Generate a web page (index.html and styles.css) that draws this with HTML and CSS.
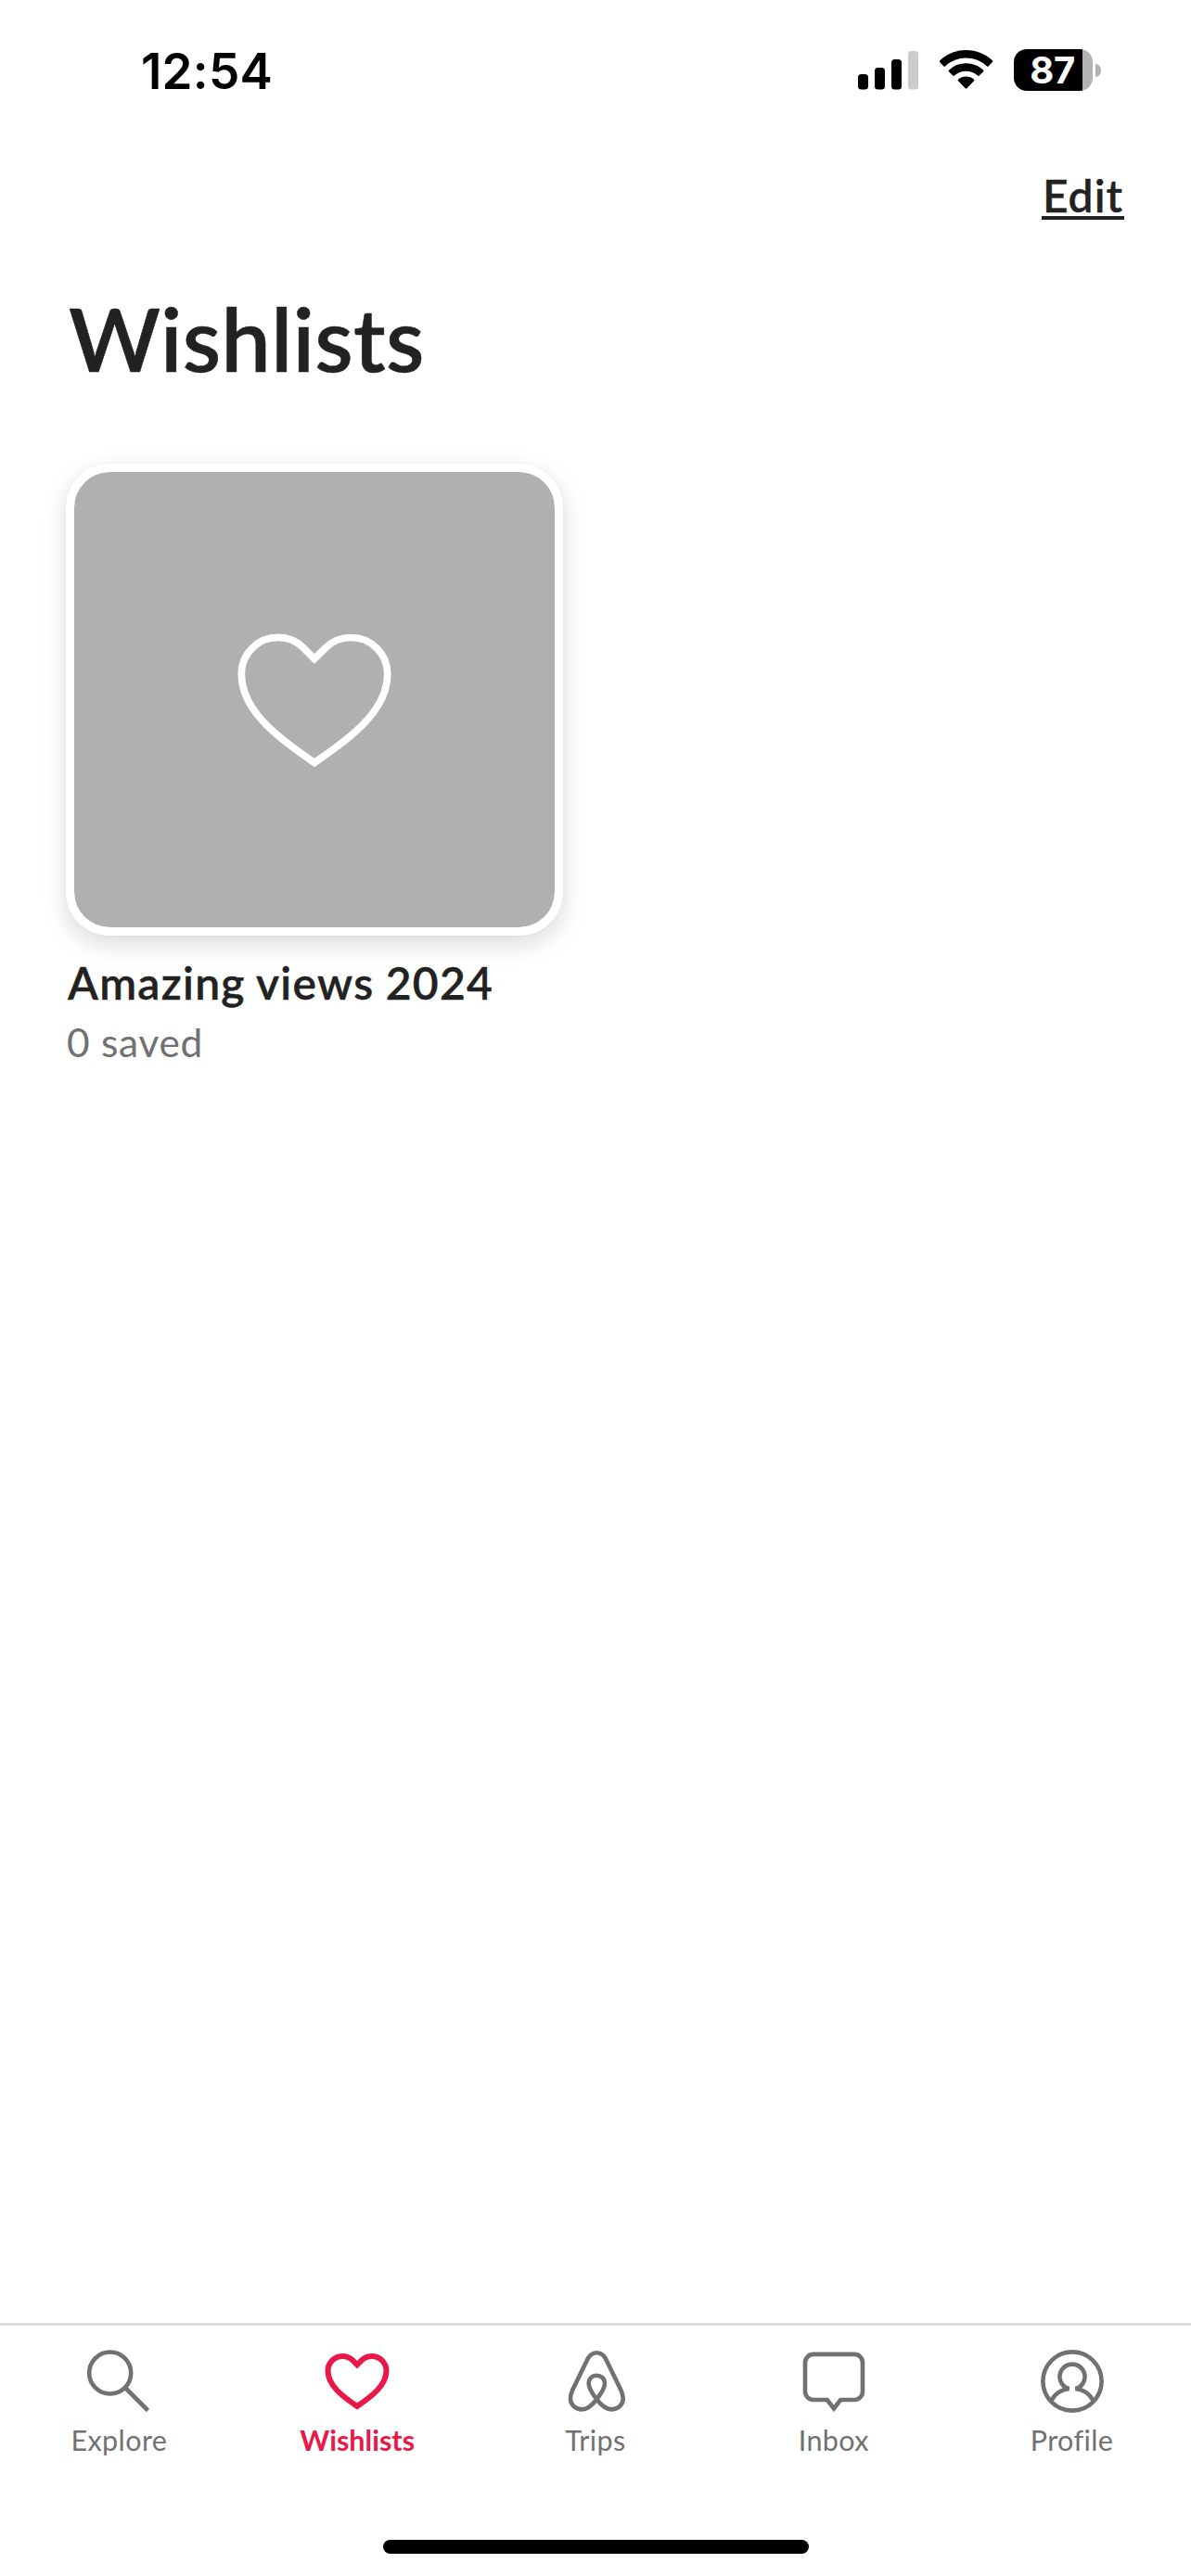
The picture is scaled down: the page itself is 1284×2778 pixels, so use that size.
FILE: index.html
```html
<!DOCTYPE html>
<html lang="en">
<head>
<meta charset="utf-8">
<title>Wishlists</title>
<link rel="stylesheet" href="styles.css">
</head>
<body>
<div class="screen">
  <header class="status">
    <span class="time">12:54</span>
    <div class="indicators">
      <svg class="signal" width="65" height="42" viewBox="0 0 65 42">
        <rect x="0" y="25" width="11" height="16.500" rx="3.500"/>
        <rect x="18" y="18" width="11" height="23.500" rx="3.500"/>
        <rect x="36" y="9" width="11" height="32.500" rx="3.500"/>
        <rect x="54" y="0" width="11" height="41.500" rx="3.500" fill="#ccc"/>
      </svg>
      <svg class="wifi" width="58" height="42" viewBox="0 0 58 42">
        <path d="M28.500 0C39.500 0 49.600 4.300 57 11.300Q57.600 12 57 12.800L52.600 17.400Q51.800 18.100 51 17.400A32.600 32.600 0 0 0 6 17.400Q5.200 18.100 4.400 17.400L0 12.800Q-.4 12 .2 11.300A41 41 0 0 1 28.500 0Z"/>
        <path d="M28.500 14.300C35.800 14.300 42.300 17.100 47.200 21.700Q47.800 22.400 47.100 23.200L42.700 27.600Q41.900 28.300 41.100 27.600A18.600 18.600 0 0 0 15.900 27.600Q15.100 28.300 14.300 27.600L9.900 23.200Q9.200 22.400 9.800 21.700A27.400 27.400 0 0 1 28.500 14.300Z"/>
        <path d="M28.500 28.500C31.800 28.500 34.800 29.700 37 31.700Q37.800 32.500 37 33.300L29.300 41.200Q28.500 42 27.700 41.200L20 33.300Q19.200 32.500 20 31.700A13 13 0 0 1 28.500 28.500Z"/>
      </svg>
      <div class="battery"><div class="cell"><span>87</span></div><i class="tip"></i></div>
    </div>
  </header>

  <div class="toolbar"><a class="edit">Edit</a></div>

  <main class="content">
    <h1 class="title">Wishlists</h1>
    <section class="card">
      <div class="cover">
        <svg width="180" height="180" viewBox="0 0 32 32" fill="none" stroke="#fff" stroke-width="1.370">
          <path d="M16 28c7-4.730 14-10 14-17a6.980 6.980 0 0 0-7-7c-1.800 0-3.580.680-4.950 2.050L16 8.100l-2.050-2.050a6.980 6.980 0 0 0-9.900 0A6.980 6.980 0 0 0 2 11c0 7 7 12.270 14 17z"/>
        </svg>
      </div>
      <h2 class="name">Amazing views 2024</h2>
      <p class="count">0 saved</p>
    </section>
  </main>

  <nav class="tabs">
    <a class="tab">
      <svg class="icon" viewBox="0 0 72 72"><circle cx="26.700" cy="27" r="22.500"/><path d="M43 43L67.500 67.500"/></svg>
      <span class="explore">Explore</span>
    </a>
    <a class="tab active">
      <svg class="icon" viewBox="0 0 72 72"><path d="M36 63c15.750-10.640 31.500-22.500 31.500-38.250A15.700 15.700 0 0 0 51.750 9c-4.050 0-8.050 1.530-11.140 4.610L36 18.220l-4.610-4.610a15.700 15.700 0 0 0-22.280 0A15.700 15.700 0 0 0 4.500 24.750C4.500 40.500 20.250 52.360 36 63z"/></svg>
      <span class="wishlists">Wishlists</span>
    </a>
    <a class="tab">
      <svg class="icon" viewBox="0 0 72 72"><path d="M37.300 55.500C33 61 28 66.400 21.300 66.400C14 66.400 9 61 9 54.800C9 51.500 9.800 48.500 11.200 45.500L27 13C29.500 8 32.500 5.300 37.300 5.300C42 5.300 45.200 8 47.600 13L63.400 45.500C64.800 48.500 65.700 51.500 65.700 54.800C65.700 61 60.600 66.400 53.400 66.400C46.500 66.400 41.500 61 37.300 55.500C33 50 28.700 44 28.700 38.500C28.700 33 32.500 29.700 37.300 29.700C42 29.700 46 33 46 38.500C46 44 41.500 50 37.300 55.500Z"/></svg>
      <span class="trips">Trips</span>
    </a>
    <a class="tab">
      <svg class="icon" viewBox="0 0 72 72"><path d="M14 6.900H58A9 9 0 0 1 67 15.900V47A9 9 0 0 1 58 56H43.200L36 65.500L28.800 56H14A9 9 0 0 1 5 47V15.900A9 9 0 0 1 14 6.900Z"/></svg>
      <span class="inbox">Inbox</span>
    </a>
    <a class="tab">
      <svg class="icon" viewBox="0 0 72 72"><circle cx="36" cy="36" r="31.600"/><path d="M32.700 44.200A13.500 13.500 0 1 1 39.300 44.200"/><path d="M13.300 56.800C17 50 24.500 45 32.700 43.800M39.300 43.800C47.500 45 55 50 58.700 56.800"/></svg>
      <span class="profile">Profile</span>
    </a>
  </nav>
  <div class="home"></div>
</div>
</body>
</html>
```
FILE: styles.css
```css
* { box-sizing: border-box; margin: 0; padding: 0; }
body { background: #fff; color: #222; font-family: Lato, "Liberation Sans", sans-serif; }
.screen { width: 1284px; height: 2778px; display: flex; flex-direction: column; overflow: hidden; }

.status { height: 152px; padding: 45px 97px 0 152px; display: flex; justify-content: space-between; align-items: flex-start; color: #000; }
.time { font: 600 53px/64px Inter, sans-serif; letter-spacing: 0.2px; }
.indicators { display: flex; align-items: flex-start; padding-top: 8px; }
.signal { margin: 2px 23px 0 0; }
.wifi { margin: 1px 22px 0 0; }
.battery { display: flex; align-items: center; gap: 3px; }
.cell { width: 85px; height: 45px; padding-right: 2px; border-radius: 14px; background: linear-gradient(90deg, #000 74px, #b3b3b3 74px); color: #fff; text-align: center; }
.cell span { font: 700 40px/45px Inter, sans-serif; letter-spacing: -0.4px; }
.tip { width: 6px; height: 14px; background: #b3b3b3; border-radius: 0 6px 6px 0 / 0 7px 7px 0; }

.toolbar { padding: 37px 72px 0 0; height: 155px; display: flex; justify-content: flex-end; align-items: flex-start; }
.edit { width: 89px; font-size: 48px; line-height: 44px; font-weight: 600; letter-spacing: 1px; -webkit-text-stroke: 0.3px currentColor; border-bottom: 4px solid #222; text-align: center; white-space: nowrap; }

.content { flex: 1; padding: 0 71px; }
.title { padding-left: 3px; font-size: 95px; line-height: 114px; font-weight: 600; letter-spacing: 0.3px; -webkit-text-stroke: 0.5px currentColor; white-space: nowrap; }
.card { width: 536px; margin-top: 79px; }
.cover { height: 509px; border: 9px solid #fff; border-radius: 47px; background: #b0b0b0; background-clip: padding-box; box-shadow: 0 9px 27px rgba(0, 0, 0, 0.15), 0 0 3px rgba(0, 0, 0, 0.04); display: flex; align-items: center; justify-content: center; }
.name { margin-top: 22px; padding-left: 2px; font-size: 48px; line-height: 58px; font-weight: 600; letter-spacing: 1.3px; word-spacing: -1px; -webkit-text-stroke: 0.4px currentColor; white-space: nowrap; }
.count { margin-top: 10px; padding-left: 1px; font-size: 42.5px; line-height: 50px; color: #717171; letter-spacing: 0.7px; }

.tabs { height: 205px; border-top: 3px solid #ddd; padding-top: 24px; display: grid; grid-template-columns: repeat(5, 1fr); color: #717171; }
.tab { display: flex; flex-direction: column; align-items: center; gap: 9px; font-size: 30.5px; line-height: 36px; letter-spacing: 0.4px; }
.icon { width: 72px; height: 72px; fill: none; stroke: currentColor; stroke-width: 4.600; }
.active { color: #e91848; font-weight: 700; letter-spacing: 0; }
.active .icon { stroke-width: 6; }
.home { width: 459px; height: 15px; margin: 29px auto 24px; border-radius: 8px; background: #000; }
```
